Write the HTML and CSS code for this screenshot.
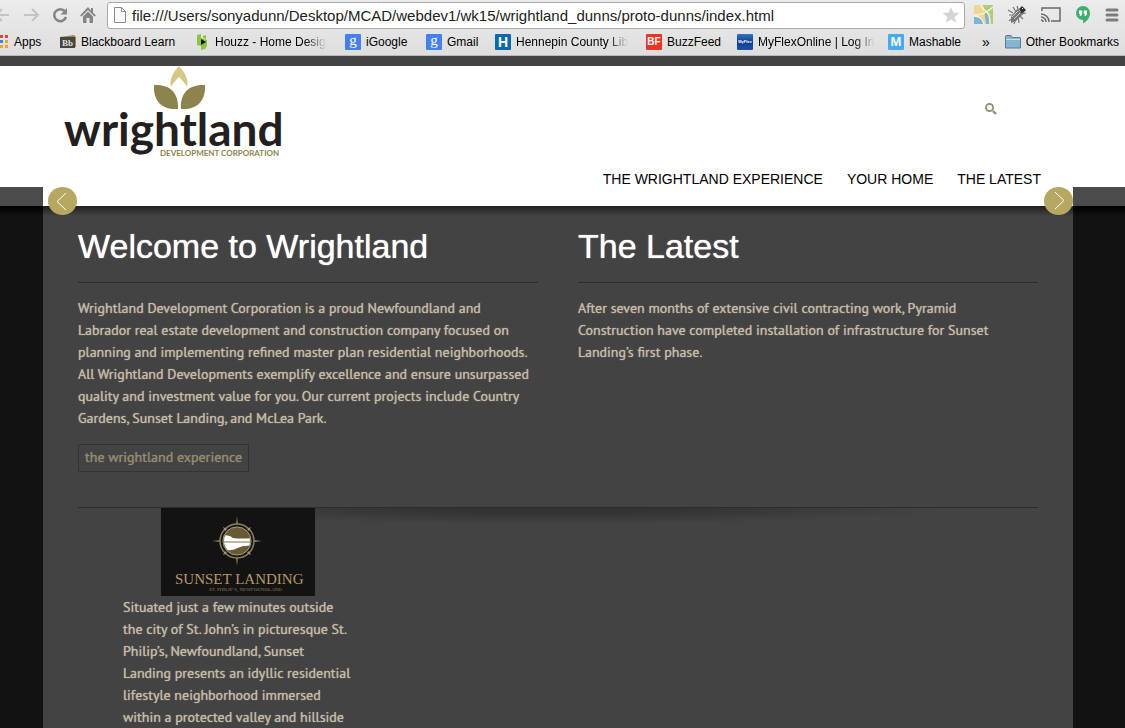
FILE: index.html
```html
<!DOCTYPE html>
<html lang="en">
<head>
<meta charset="utf-8">
<title>Wrightland Development Corporation</title>
<link rel="stylesheet" href="styles.css">
</head>
<body>
<div class="browser">
  <div class="toolbar">
    <button class="tool back" aria-label="Back"><svg width="16" height="16" viewBox="0 0 16 16" fill="none" stroke="#c3c3c3" stroke-width="2"><path d="M15 8H2M8 2L2 8l6 6"/></svg></button>
    <button class="tool forward" aria-label="Forward"><svg width="16" height="16" viewBox="0 0 16 16" fill="none" stroke="#c3c3c3" stroke-width="2"><path d="M0 8h14M8 2l6 6-6 6"/></svg></button>
    <button class="tool reload" aria-label="Reload"><svg width="16" height="16" viewBox="0 0 16 16"><path d="M13 4.500A6 6 0 1 0 14 10" fill="none" stroke="#858585" stroke-width="2.500"/><path d="M15 1v6.500H8.500z" fill="#858585"/></svg></button>
    <button class="tool home" aria-label="Home"><svg width="16" height="16" viewBox="0 0 16 16" fill="#858585"><path d="M8 0L0 8.500l1.500 1L8 3l6.500 6.500 1.500-1-3-3V1h-2v2.500z"/><path d="M3 9.500l5-5 5 5V16H9.500v-5h-3v5H3z"/></svg></button>
    <div class="address">
      <svg width="12" height="16" viewBox="0 0 12 16" fill="#f9f9f9" stroke="#8b8b8b"><path d="M.5.5h7l4 4v11H.5zM7.500.5v4h4"/></svg>
      <input type="text" aria-label="Address" value="file:///Users/sonyadunn/Desktop/MCAD/webdev1/wk15/wrightland_dunns/proto-dunns/index.html">
      <svg width="18" height="18" viewBox="0 0 18 18" fill="#d5d5d5"><path d="M9 1l2.300 5.600 6 .4-4.600 3.900 1.500 5.900L9 13.600l-5.200 3.200 1.500-5.900L.7 7l6-.4z"/></svg>
    </div>
    <div class="extensions">
      <button class="tool" aria-label="Maps"><svg width="19" height="19" viewBox="0 0 19 19"><path fill="#efd597" d="M0 0h19v19H0z"/><path fill="#7eb4db" d="M0 11q6 0 9 3l1 5H0zM10 5l5 5v9h-3z"/><path fill="#a9cf7c" d="M9 0h10v10l-4-1-5-5zM15 10h4v9h-4z"/><path d="M0 10q9 1 19-8M7 0q2 5 6 7 3 3 3 12M0 11q8 0 10 8" stroke="#fff3c4" stroke-width="1.500" fill="none"/></svg></button>
      <button class="tool" aria-label="Inspect"><svg width="20" height="20" viewBox="0 0 20 20"><path d="M4 12l6-8 6 5-7 7-5 2z" fill="#777"/><path d="M12 4l3-3 4 4-4 4z" fill="#333"/><path d="M1 5l5 3M2 10h5M2 16l5-4M7 19l2-6M12 18l-1-7M16 14l-4-4M6 2l3 5M10 1l2 6M19 8l-5 1" stroke="#777" stroke-width="1.200" fill="none"/><path d="M5 12l6-6M7 14l6-6" stroke="#ccc"/><path d="M15 3l1 1" stroke="#fff"/></svg></button>
      <button class="tool" aria-label="Cast"><svg width="20" height="18" viewBox="0 0 20 18" fill="none" stroke="#686868" stroke-width="1.500"><path d="M1 5V2h18v13h-9M0 8a8 8 0 0 1 8 8M0 11a5 5 0 0 1 5 5M0 14a2 2 0 0 1 2 2"/></svg></button>
      <button class="tool" aria-label="Hangouts"><svg width="16" height="18" viewBox="0 0 16 18"><path d="M8 0a7 7 0 0 1 7 7c0 5-3 8-7 10.500V14A7 7 0 0 1 8 0z" fill="#3eb06b"/><path d="M4 4.500h3.200V8L6 10H4.500l.7-2H4zM8.800 4.500H12V8l-1.200 2H9.300L10 8H8.800z" fill="#fff"/></svg></button>
      <button class="tool" aria-label="Menu"><svg width="14" height="14" viewBox="0 0 14 14" stroke="#7d7d7d" stroke-width="3" stroke-linecap="round"><path d="M2 2h10M2 7h10M2 12h10"/></svg></button>
    </div>
  </div>
  <nav class="bookmarks" aria-label="Bookmarks">
    <a class="mark apps" href="#"><svg width="8" height="14" viewBox="0 0 8 14"><path fill="#e94235" d="M0 0h3v3H0zM5 0h3v3H5z"/><path fill="#2c8cec" d="M0 5h3v3H0z"/><path fill="#f4a32f" d="M5 5h3v3H5zM0 10h3v3H0zM5 10h3v3H5z"/></svg><span>Apps</span></a>
    <a class="mark blackboard" href="#"><svg width="16" height="14" viewBox="0 0 16 14"><path fill="#a58845" d="M0 2l14-2 2 2v10H0z"/><path fill="#454545" d="M0 2h15v11H0z"/><text class="bb" x="2" y="11">Bb</text></svg><span>Blackboard Learn</span></a>
    <a class="mark houzz" href="#"><svg width="12" height="16" viewBox="0 0 12 16"><path fill="#8ac63f" d="M1 1l4-1v4l6 2v6l-2 3-4 1v-4l-4-1zM7 2l3-1v4L7 4z"/><path fill="#111" d="M5 5l5 3-5 3z"/></svg><span class="fade">Houzz - Home Desig</span></a>
    <a class="mark igoogle" href="#"><b class="tile google">g</b><span>iGoogle</span></a>
    <a class="mark gmail" href="#"><b class="tile google">g</b><span>Gmail</span></a>
    <a class="mark hennepin" href="#"><b class="tile county">H</b><span class="fade">Hennepin County Lib</span></a>
    <a class="mark buzz" href="#"><b class="tile feed">BF</b><span>BuzzFeed</span></a>
    <a class="mark flex" href="#"><b class="tile myflex">MyFlex</b><span class="fade">MyFlexOnline | Log In</span></a>
    <a class="mark mash" href="#"><b class="tile mashable">M</b><span>Mashable</span></a>
    <button class="more" aria-label="More bookmarks">»</button>
    <a class="mark other" href="#"><svg width="16" height="14" viewBox="0 0 16 14"><path d="M.5 13V1.500Q.5.500 2 .5h4l1 2h8q.5 0 .5 1V13z" fill="#88b3cd" stroke="#567d95"/><path d="M1 4.500h14" stroke="#c5dfed"/></svg><span>Other Bookmarks</span></a>
  </nav>
</div>

<div class="site">
  <header class="header">
    <div class="container head">
      <a class="logo" href="#" aria-label="Wrightland Development Corporation">
        <svg width="224" height="94" viewBox="0 0 224 94">
          <path fill="#d5c887" d="M116 0c6 7 10 13 8 21-2-4-5-7-8-10-3 3-6 6-8 10-2-8 2-14 8-21z"/>
          <path fill="#8d834c" d="M91 19c16-1 25 8 24 24-16 1-25-8-24-24zM142 19c1 16-8 25-24 24-1-16 8-25 24-24z"/>
          <text class="word" x="1" y="80">wrightland</text>
          <text class="sub" x="97" y="90">DEVELOPMENT CORPORATION</text>
        </svg>
      </a>
      <div class="side">
        <button class="search" aria-label="Search"><svg width="12" height="12" viewBox="0 0 12 12" fill="none" stroke="#938b70"><circle cx="4.500" cy="4.500" r="3.600" stroke-width="1.700"/><path d="M8 8l3 3" stroke-width="2.400"/></svg></button>
        <nav class="menu" aria-label="Main">
          <a href="#">THE WRIGHTLAND EXPERIENCE</a>
          <a href="#">YOUR HOME</a>
          <a href="#">THE LATEST</a>
        </nav>
      </div>
    </div>
  </header>
  <div class="slider">
    <div class="container slide">
      <button class="arrow" aria-label="Previous"><svg width="29" height="28" viewBox="0 0 29 28"><ellipse cx="14.500" cy="14" rx="14.500" ry="14" fill="#b6a860"/><path d="M18 6l-9 8.500 9 8.500" fill="none" stroke="#fff"/></svg></button>
      <button class="arrow" aria-label="Next"><svg width="29" height="28" viewBox="0 0 29 28"><ellipse cx="14.500" cy="14" rx="14.500" ry="14" fill="#b6a860"/><path d="M11 5l9 8.500-9 8.500" fill="none" stroke="#fff"/></svg></button>
    </div>
  </div>
  <div class="page">
    <main class="container main">
      <div class="columns">
        <section>
          <h1>Welcome to Wrightland</h1>
          <p>Wrightland Development Corporation is a proud Newfoundland and<br>Labrador real estate development and construction company focused on<br>planning and implementing refined master plan residential neighborhoods.<br>All Wrightland Developments exemplify excellence and ensure unsurpassed<br>quality and investment value for you. Our current projects include Country<br>Gardens, Sunset Landing, and McLea Park.</p>
          <a class="cta" href="#">the wrightland experience</a>
        </section>
        <section>
          <h1>The Latest</h1>
          <p>After seven months of extensive civil contracting work, Pyramid<br>Construction have completed installation of infrastructure for Sunset<br>Landing’s first phase.</p>
        </section>
      </div>
      <div class="projects">
        <article class="project">
          <svg class="badge" width="154" height="88" viewBox="0 0 154 88" role="img" aria-label="Sunset Landing">
            <defs><pattern id="weave" width="4" height="4" patternUnits="userSpaceOnUse"><path fill="#111" d="M0 0h4v4H0z"/><path d="M0 0l2 2M2 4l2-2" stroke="#191919"/></pattern>
            <clipPath id="disc"><circle cx="76" cy="33" r="13"/></clipPath></defs>
            <path fill="url(#weave)" d="M0 0h154v88H0z"/>
            <path fill="#97865c" d="M75 17l1-9 1 9zM75 49l1 9 1-9zM60 32l-9 1 9 1zM92 32l9 1-9 1z"/>
            <circle cx="76" cy="33" r="17" fill="#1b1c20" stroke="#8b7d58" stroke-width="1.500"/>
            <path d="M62 19l4 2-2 2zM90 19l-4 2 2 2zM62 47l4-2-2-2zM90 47l-4-2 2-2z" fill="#a29978"/>
            <circle cx="76" cy="33" r="14" fill="#655c36" stroke="#a69b70"/>
            <g clip-path="url(#disc)"><path fill="#fff" d="M60 28q8-2 12 2 8 1 20 0v8q-10-1-15 2-8 4-17 1z"/><path d="M62 34h28" stroke="#777048"/></g>
            <text class="badge-name" x="14" y="76">SUNSET LANDING</text>
            <text class="badge-sub" x="48" y="83">ST. PHILIP’S, NEWFOUNDLAND</text>
          </svg>
          <p>Situated just a few minutes outside<br>the city of St. John’s in picturesque St.<br>Philip’s, Newfoundland, Sunset<br>Landing presents an idyllic residential<br>lifestyle neighborhood immersed<br>within a protected valley and hillside</p>
        </article>
      </div>
    </main>
  </div>
</div>
</body>
</html>
```
FILE: styles.css
```css
* { box-sizing: border-box; }
body {
  margin: 0;
  height: 100vh;
  overflow: hidden;
  display: flex;
  flex-direction: column;
  background: #121212;
  font-family: "Liberation Sans", Arial, sans-serif;
}
button { border: 0; padding: 0; background: none; display: flex; font: inherit; }
a { color: inherit; text-decoration: none; }
svg { display: block; flex: none; }

.browser {
  flex: none;
  background: linear-gradient(#ececec, #dedede);
  border-bottom: 1px solid #b8b8b8;
}
.toolbar { display: flex; align-items: center; height: 29px; padding-right: 6px; }
.back { margin-left: -6px; }
.forward { margin-left: 14px; }
.reload { margin-left: 12px; }
.home { margin-left: 12px; }
.address {
  flex: 1;
  display: flex;
  align-items: center;
  height: 27px;
  margin: 1px 9px 0 11px;
  padding: 0 4px 0 6px;
  background: #fff;
  border: 1px solid #aaa;
  border-radius: 3px;
}
.address input {
  flex: 1;
  min-width: 0;
  border: 0;
  padding: 0 0 0 6px;
  background: none;
  color: #222;
  font: 15px "Liberation Sans", Arial, sans-serif;
}
.extensions { display: flex; align-items: center; gap: 14px; }
.bookmarks {
  display: flex;
  align-items: center;
  height: 26px;
  padding-right: 6px;
  color: #000;
  font-size: 12px;
}
.mark { display: flex; align-items: center; gap: 5px; white-space: nowrap; flex: none; }
.fade { -webkit-mask-image: linear-gradient(to right, #000 82%, transparent); mask-image: linear-gradient(to right, #000 82%, transparent); }
.apps { width: 60px; gap: 6px; }
.blackboard { width: 136px; }
.houzz { width: 149px; gap: 7px; }
.igoogle { width: 81px; }
.gmail { width: 69px; }
.hennepin { width: 151px; }
.buzz { width: 91px; }
.flex { width: 151px; }
.mash { width: 90px; }
.more { font-size: 14px; margin-left: 4px; }
.other { margin-left: auto; }
.tile {
  flex: none;
  width: 16px;
  height: 16px;
  border-radius: 1px;
  color: #fff;
  text-align: center;
  line-height: 16px;
}
.google { background: #4580ef; font: 15px/13px "Liberation Serif", serif; }
.county { background: #0869ae; font-size: 14px; }
.feed { background: #ee3322; font-size: 10px; }
.myflex { background: linear-gradient(#3275c4, #0d3d91 50%, #1854aa); font-size: 4px; }
.mashable { background: #45aaf2; font-size: 13px; }
.bb { font: bold 9px "Liberation Serif", serif; fill: #ddd; }

.site { flex: 1; min-height: 0; display: flex; flex-direction: column; border-top: 10px solid #434343; }
.header, .slider, .page { padding-right: 9px; }
.container { width: calc(100% - 86px); max-width: 1030px; margin: 0 auto; }
.header { flex: none; background: #fff; }
.head { display: flex; justify-content: space-between; height: 121px; padding: 0 32px 0 20px; }
.side { display: flex; flex-direction: column; align-items: flex-end; justify-content: space-between; padding-top: 37px; }
.search { margin-right: 44px; }
.menu { display: flex; gap: 24px; color: #000; font-size: 14px; line-height: 16px; white-space: nowrap; }
.word { font: bold 46px Lato, sans-serif; fill: #231f20; }
.sub { font: bold 8px Lato, sans-serif; fill: #8d834c; }
.slider { flex: none; background: #4b4b4b; }
.slide { display: flex; justify-content: space-between; align-items: flex-start; height: 19px; padding-left: 5px; background: #fff; }
.arrow { position: relative; z-index: 1; }

.page { flex: 1; background: linear-gradient(#000, #121212 10px); }
.main {
  height: 100%;
  padding: 0 35px;
  background: linear-gradient(#1f1f1f, #434343 10px);
  color: #c5bba7;
}
.columns {
  display: grid;
  grid-template-columns: 1fr 1fr;
  gap: 40px;
  padding-bottom: 35px;
  border-bottom: 1px solid #2d2d2d;
}
h1 {
  margin: 0 0 14px;
  padding: 20px 0 16px;
  border-bottom: 1px solid #2d2d2d;
  color: #fff;
  font-size: 34px;
  font-weight: 400;
  line-height: 40px;
  text-shadow: 0 0 1px #fff;
  white-space: nowrap;
}
p {
  margin: 0;
  font-family: "PT Sans", Lato, sans-serif;
  font-size: 14px;
  line-height: 22px;
  text-shadow: 0 0 1px #c5bba7;
  white-space: nowrap;
}
.cta {
  display: block;
  width: fit-content;
  margin-top: 15px;
  padding: 1px 6px 3px;
  border: 1px solid #333;
  color: #938b70;
  font: 14px/22px "PT Sans", Lato, sans-serif;
  text-shadow: 0 0 1px #938b70;
}
.projects { background: radial-gradient(ellipse 400px 16px at 475px 0, #333 30%, transparent) no-repeat; }
.project { width: 320px; padding-left: 45px; }
.badge { margin-left: 38px; }
.badge-name { font: 15px "Liberation Serif", serif; fill: #b59966; }
.badge-sub { font: 5px "Liberation Serif", serif; fill: #8d7a52; }
```
